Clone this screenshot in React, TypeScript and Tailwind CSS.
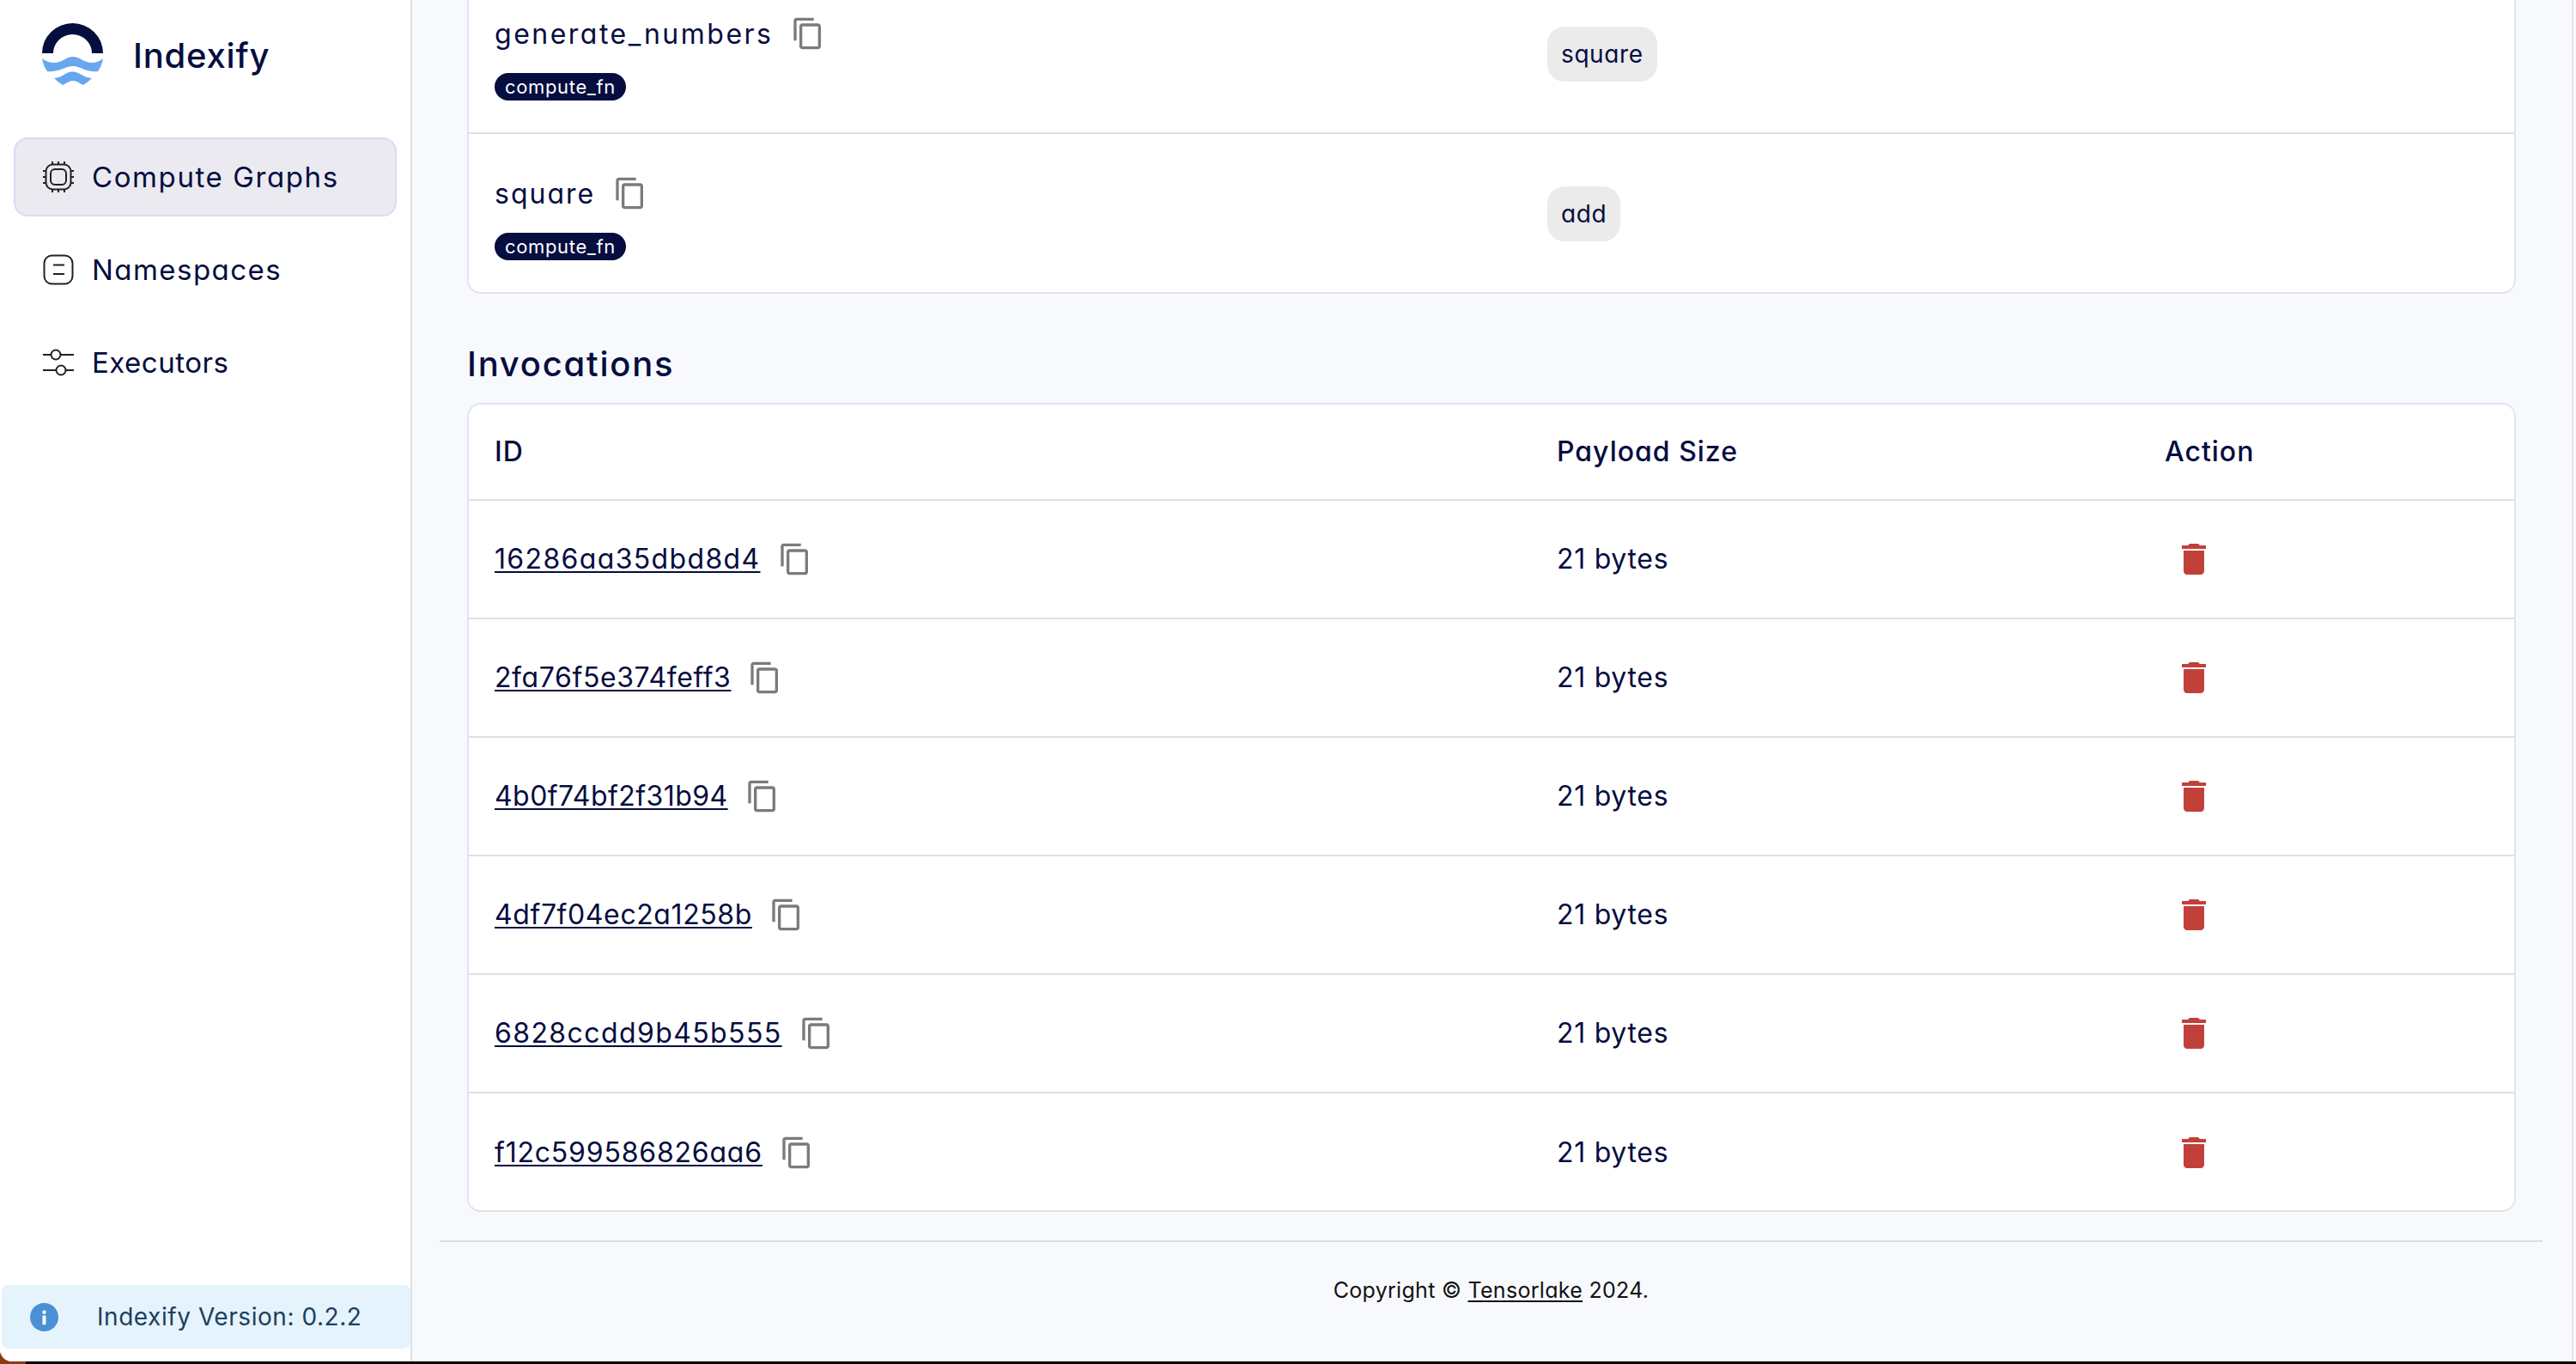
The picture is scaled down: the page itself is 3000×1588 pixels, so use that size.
const NAVY = "#060d3f";

function CopyIcon({ className = "" }: { className?: string }) {
  return (
    <svg viewBox="0 0 24 24" className={`w-10 h-10 shrink-0 fill-[#7b7b7b] ${className}`}>
      <path d="M16 1H4c-1.1 0-2 .9-2 2v14h2V3h12V1zm3 4H8c-1.1 0-2 .9-2 2v14c0 1.1.9 2 2 2h11c1.1 0 2-.9 2-2V7c0-1.1-.9-2-2-2zm0 16H8V7h11v14z" />
    </svg>
  );
}

function TrashIcon() {
  return (
    <svg viewBox="0 0 24 24" className="w-12 h-12 fill-[#c2403a]">
      <path d="M6 19c0 1.1.9 2 2 2h8c1.1 0 2-.9 2-2V7H6v12zM19 4h-3.5l-1-1h-5l-1 1H5v2h14V4z" />
    </svg>
  );
}

function Logo() {
  return (
    <svg viewBox="0 0 72 72" className="w-[72px] h-[72px] shrink-0">
      <path d="M0 35 A35.5 35 0 0 1 71 35 L58 35 A22.5 22 0 0 0 13 35 Z" fill="#060d3f" />
      <path d="M0 41 C6 46 14 47 20 45 C26 43 30 39 36 39 C42 39 46 43 52 45 C58 47 65 46 71 41 C70 47 68 52 65 56 C58 57 52 55 47 53 C42 51 40 50 36 50 C32 50 29 51 24 53 C19 55 12 57 6 56 C3 52 1 47 0 41 Z" fill="#68a7f0" />
      <path d="M14 64 C20 64 25 60 29 58 C33 56 38 56 42 58 C46 60 52 64 58 64 C55 67 51 70 48 72 C44 70 40 67 36 67 C32 67 28 70 24 72 C21 70 17 67 14 64 Z" fill="#68a7f0" />
    </svg>
  );
}

function ChipIcon() {
  return (
    <svg viewBox="0 0 36 36" className="w-9 h-9 shrink-0 fill-none stroke-[#222] stroke-2">
      <rect x="3.5" y="3.5" width="29" height="29" rx="8" />
      <rect x="9" y="9" width="18" height="18" rx="5" />
      <path d="M11 0v3M18 0v3M25 0v3M11 33v3M18 33v3M25 33v3M0 11h3M0 18h3M0 25h3M33 11h3M33 18h3M33 25h3" />
    </svg>
  );
}

function NamespaceIcon() {
  return (
    <svg viewBox="0 0 36 36" className="w-9 h-9 shrink-0 fill-none stroke-[#222] stroke-2">
      <rect x="1.5" y="1.5" width="33" height="33" rx="9" />
      <path d="M12 12.5h13M12 23h13" />
    </svg>
  );
}

function SlidersIcon() {
  return (
    <svg viewBox="0 0 36 36" className="w-9 h-9 shrink-0 fill-none stroke-[#222] stroke-2">
      <circle cx="15" cy="9" r="5.5" />
      <circle cx="21" cy="27" r="5.5" />
      <path d="M0 9h9.5M20.5 9H36M0 27h15.5M26.5 27H36" />
    </svg>
  );
}

function NavItem({
  icon,
  label,
  active,
  track,
}: {
  icon: React.ReactNode;
  label: string;
  active?: boolean;
  track: string;
}) {
  return (
    <div
      className={`flex items-center h-[92px] mx-4 pl-[32px] gap-[21px] rounded-2xl border-2 ${
        active ? "bg-[#eaeaf0] border-[#d5ddf0]" : "border-transparent"
      }`}
    >
      {icon}
      <span className={`text-[33px] text-[#060d3f] pt-[2px] ${track}`}>{label}</span>
    </div>
  );
}

function Sidebar() {
  return (
    <aside className="w-[480px] shrink-0 h-full bg-white border-r-2 border-[#e0e0e3] flex flex-col">
      <div className="flex items-center pl-[49px] gap-[34px] h-[126px]">
        <Logo />
        <span className="text-[40px] font-medium tracking-[0.8px] text-[#060d3f] pt-[3px]">Indexify</span>
      </div>
      <nav className="flex flex-col mt-[34px] gap-[16px]">
        <NavItem icon={<ChipIcon />} label="Compute Graphs" active track="tracking-[1.6px]" />
        <NavItem icon={<NamespaceIcon />} label="Namespaces" track="tracking-[1.45px]" />
        <NavItem icon={<SlidersIcon />} label="Executors" track="tracking-[0.5px]" />
      </nav>
      <div className="mt-auto mb-[15px] ml-[2px] h-[74px] bg-[#e5f3fc] rounded-lg flex items-center pl-[33px] gap-[45px]">
        <svg viewBox="0 0 34 34" className="w-[33px] h-[33px]">
          <circle cx="17" cy="17" r="17" fill="#4a90d4" />
          <rect x="15" y="15" width="4" height="11" fill="#fff" />
          <rect x="15" y="9" width="4" height="4" fill="#fff" />
        </svg>
        <span className="text-[28px] tracking-[0.55px] text-[#1c4060]">Indexify Version: 0.2.2</span>
      </div>
    </aside>
  );
}

function FnRow({
  name,
  next,
  h,
  last,
  track,
}: {
  name: string;
  next: string;
  h: string;
  last?: boolean;
  track: string;
}) {
  return (
    <div className={`flex items-end ${h} ${last ? "" : "border-b-2 border-[#e0e0e0]"}`}>
      <div className="w-[1256px] pl-[30px] pb-[37px] shrink-0">
        <div className="flex items-center gap-[21px] h-[40px] mb-[26px]">
          <span className={`text-[32px] text-[#060d3f] pt-[1px] ${track}`}>{name}</span>
          <CopyIcon />
        </div>
        <span className="flex w-fit items-center h-[32px] px-3 rounded-full bg-[#060d3f] text-white text-[22px] tracking-[0.65px]">
          compute_fn
        </span>
      </div>
      <div className="pb-[59px]">
        <span className="flex w-fit items-center h-[64px] px-4 rounded-[20px] bg-[#ebebeb] text-[28px] tracking-[0.6px] text-[#060d3f]">
          {next}
        </span>
      </div>
    </div>
  );
}

const ROWS = [
  { id: "16286aa35dbd8d4", track: "tracking-[1.35px]" },
  { id: "2fa76f5e374feff3", track: "tracking-[0.6px]" },
  { id: "4b0f74bf2f31b94", track: "tracking-[0.45px]" },
  { id: "4df7f04ec2a1258b", track: "tracking-[0.6px]" },
  { id: "6828ccdd9b45b555", track: "tracking-[1.4px]" },
  { id: "f12c599586826aa6", track: "tracking-[0.8px]" },
];

function InvocationRow({ id, track, last }: { id: string; track: string; last?: boolean }) {
  return (
    <div className={`flex items-center h-[138px] ${last ? "" : "border-b-2 border-[#e0e0e0]"}`}>
      <div className="w-[1235px] shrink-0 pl-[30px] flex items-center gap-[20px]">
        <a
          className={`text-[32px] text-[#060d3f] underline decoration-2 underline-offset-[3px] ${track}`}
        >
          {id}
        </a>
        <CopyIcon />
      </div>
      <div className="w-[708px] shrink-0 pl-[32px] text-[32px] tracking-[0.7px] text-[#060d3f]">21 bytes</div>
      <div className="pl-[42px] flex items-center">
        <TrashIcon />
      </div>
    </div>
  );
}

export default function App() {
  return (
    <div
      className="w-[3000px] h-[1588px] overflow-hidden bg-black relative [font-feature-settings:'cv11']"
      style={{ fontFamily: "Inter, 'Liberation Sans', sans-serif", color: NAVY }}
    >
      <div className="absolute left-0 bottom-0 w-[30px] h-[18px] bg-[#8a3a14]" />
      <div className="relative flex h-[1585px] rounded-bl-[14px] overflow-hidden bg-[#f8f9fd] border-r-[3px] border-[#f8f9fd]">
        <Sidebar />
        <main className="flex-1 min-w-0 flex flex-col border-r-2 border-[#e4e4e8]">
          <div className="ml-[64px] w-[2386px] h-[342px] bg-white border-x-2 border-b-2 border-x-[#dce5f7] border-b-[#e0e2e6] rounded-b-2xl overflow-hidden shrink-0">
            <FnRow name="generate_numbers" next="square" h="h-[156px]" track="tracking-[2.5px]" />
            <FnRow name="square" next="add" h="h-[184px]" last track="tracking-[2px]" />
          </div>
          <h2 className="ml-[64px] mt-[52px] h-[75px] text-[40px] leading-[60px] font-medium tracking-[1.75px] text-[#060d3f]">
            Invocations
          </h2>
          <div className="ml-[64px] w-[2386px] h-[942px] bg-white border-2 border-[#dce5f7] border-b-[#e0e2e6] rounded-2xl overflow-hidden shrink-0">
            <div className="flex items-center h-[112px] border-b-2 border-[#e0e0e0] font-medium text-[32px] tracking-[1px] text-[#060d3f]">
              <div className="w-[1235px] shrink-0 pl-[30px]">ID</div>
              <div className="w-[708px] shrink-0 pl-[32px]">Payload Size</div>
              <div className="pl-[32px]">Action</div>
            </div>
            {ROWS.map((r, i) => (
              <InvocationRow key={r.id} id={r.id} track={r.track} last={i === ROWS.length - 1} />
            ))}
          </div>
          <footer className="ml-[32px] mr-[34px] mt-[33px] border-t-2 border-[#dcdde1] h-[115px] flex items-center justify-center text-[25px] tracking-[0.3px] text-[#111]">
            <span>
              Copyright © <a className="underline decoration-2 underline-offset-[3px]">Tensorlake</a> 2024.
            </span>
          </footer>
        </main>
      </div>
    </div>
  );
}
